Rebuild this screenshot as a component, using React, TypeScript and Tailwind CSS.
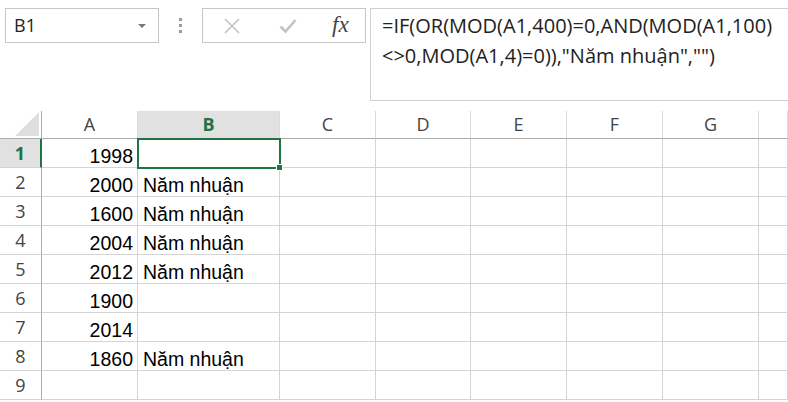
import React from "react";

const cols = ["A", "B", "C", "D", "E", "F", "G", ""];
const rows: [string, string][] = [
  ["1998", ""],
  ["2000", "Năm nhuận"],
  ["1600", "Năm nhuận"],
  ["2004", "Năm nhuận"],
  ["2012", "Năm nhuận"],
  ["1900", ""],
  ["2014", ""],
  ["1860", "Năm nhuận"],
  ["", ""],
];

const uiFont = { fontFamily: '"Open Sans", "Noto Sans", sans-serif' };
const cellFont = { fontFamily: '"Liberation Sans", Arial, sans-serif' };

function FormulaBar() {
  return (
    <div className="flex h-[111px] items-start bg-white pt-2" style={uiFont}>
      {/* Name box */}
      <div className="ml-[5px] flex h-[35px] w-[154px] items-center justify-between border border-[#c6c6c6] pl-2 pr-3 text-[18px] text-[#222]">
        <span>B1</span>
        <span className="h-0 w-0 border-x-[4px] border-t-[4px] border-x-transparent border-t-[#777]" />
      </div>
      {/* Grip dots */}
      <div className="mx-[20px] mt-[10px] flex flex-col gap-[3px]">
        <span className="h-[3px] w-[3px] bg-[#9a9a9a]" />
        <span className="h-[3px] w-[3px] bg-[#9a9a9a]" />
        <span className="h-[3px] w-[3px] bg-[#9a9a9a]" />
      </div>
      {/* Cancel / Enter / fx */}
      <div className="flex h-[35px] w-[164px] items-center border border-[#c6c6c6]">
        <svg className="ml-[20px]" width="18" height="18" viewBox="0 0 18 18">
          <path d="M2 2 L16 16 M16 2 L2 16" stroke="#c3c3c3" strokeWidth="1.6" fill="none" />
        </svg>
        <svg className="ml-[38px]" width="18" height="16" viewBox="0 0 18 16">
          <path d="M1.5 8.5 L6.5 13.5 L16.5 2" stroke="#c3c3c3" strokeWidth="2.6" fill="none" />
        </svg>
        <span
          className="ml-[35px] text-[23px] italic text-[#444]"
          style={{ fontFamily: '"Liberation Serif", "Times New Roman", serif' }}
        >
          fx
        </span>
      </div>
      {/* Formula box */}
      <div className="ml-[4px] h-[93px] flex-1 overflow-hidden whitespace-nowrap border border-r-0 border-[#d0d0d0] pl-[11px] pt-[2px] text-[20px] leading-[30px] text-[#222]">
        =IF(OR(MOD(A1,400)=0,AND(MOD(A1,100)
        <br />
        &lt;&gt;0,MOD(A1,4)=0)),"Năm nhuận","")
      </div>
    </div>
  );
}

function Sheet() {
  return (
    <div className="grid grid-cols-[42px_96px_142px_96px_95px_96px_96px_96px_1fr] grid-rows-[28px_repeat(9,29px)]">
      {/* Corner */}
      <div className="flex items-end justify-end border-r border-b border-[#ababab] pb-[2px] pr-[2px]">
        <span className="h-0 w-0 border-b-[24px] border-l-[24px] border-b-[#dfdfdf] border-l-transparent" />
      </div>
      {cols.map((c, i) => (
        <div
          key={"h" + i}
          className={
            "flex items-center justify-center border-r border-b border-r-[#dadada] border-b-[#ababab] text-[18px] " +
            (c === "B" ? "bg-[#e1e1e1] font-bold text-[#217346]" : "bg-white text-[#444]")
          }
          style={uiFont}
        >
          {c}
        </div>
      ))}
      {rows.map(([a, b], r) => (
        <React.Fragment key={r}>
          <div
            className={
              "flex items-center justify-center border-b border-[#d4d4d4] text-[18px] " +
              (r === 0
                ? "border-r-2 border-r-[#217346] bg-[#e1e1e1] font-bold text-[#217346]"
                : "border-r border-r-[#ababab] text-[#444]")
            }
            style={uiFont}
          >
            {r + 1}
          </div>
          <div
            className="flex items-end justify-end border-r border-b border-[#d4d4d4] pb-[1px] pr-[4px] text-[19.5px] leading-none text-black"
            style={cellFont}
          >
            {a}
          </div>
          <div
            className={
              "relative flex items-end border-r border-b border-[#d4d4d4] pb-[1px] pl-[5px] text-[19.5px] leading-none text-black " +
              (r === 0 ? "z-10 outline-2 -outline-offset-1 outline-[#217346]" : "")
            }
            style={cellFont}
          >
            {b}
            {r === 0 && (
              <span className="absolute -bottom-[4px] -right-[4px] h-[7px] w-[7px] border border-white bg-[#217346]" />
            )}
          </div>
          {[0, 1, 2, 3, 4, 5].map((k) => (
            <div key={k} className="border-r border-b border-[#d4d4d4]" />
          ))}
        </React.Fragment>
      ))}
    </div>
  );
}

export default function App() {
  return (
    <div className="h-[402px] w-[788px] overflow-hidden bg-white">
      <FormulaBar />
      <Sheet />
    </div>
  );
}
